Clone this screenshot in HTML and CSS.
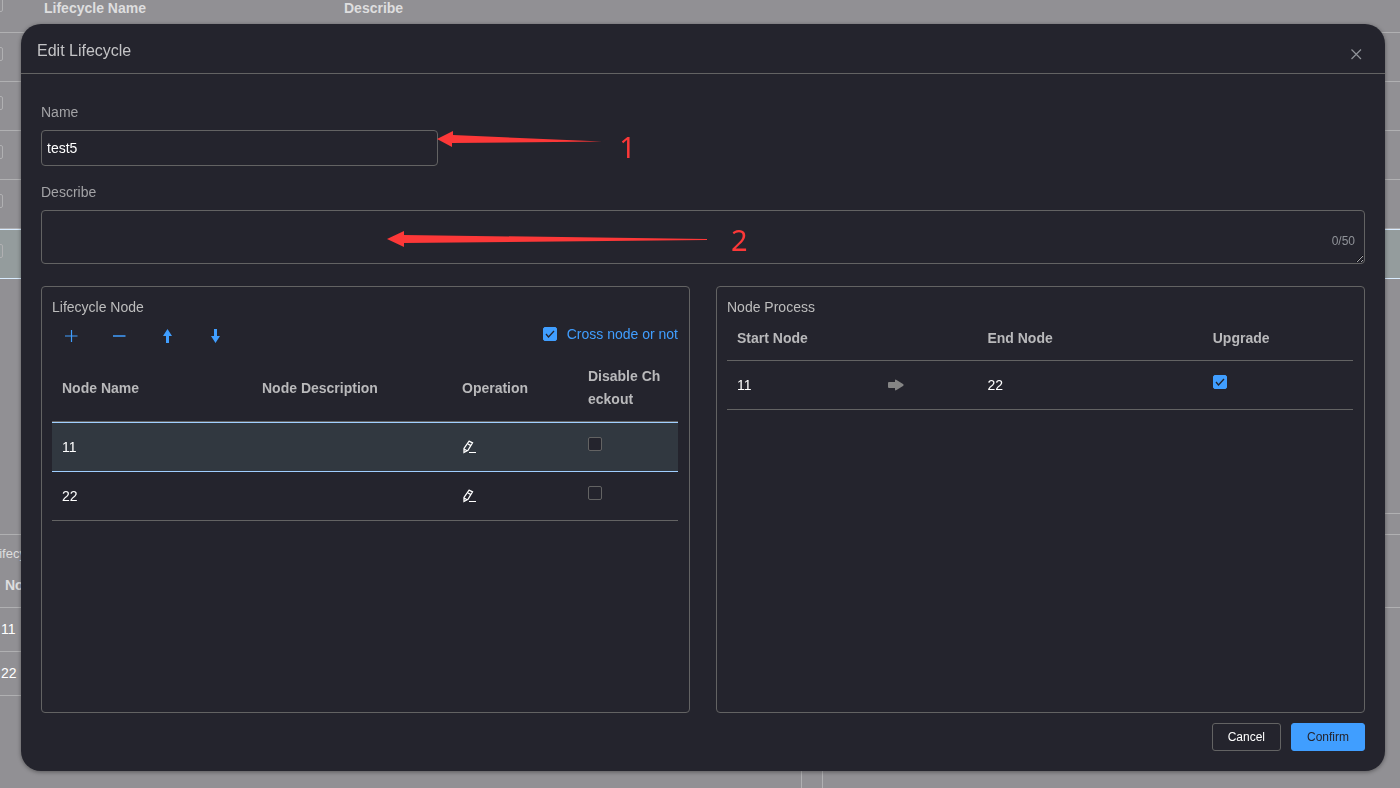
FILE: index.html
```html
<!DOCTYPE html>
<html lang="en">
<head>
<meta charset="utf-8">
<meta name="viewport" content="width=device-width, initial-scale=1">
<title>Edit Lifecycle</title>
<link rel="stylesheet" href="styles.css">
</head>
<body>
<div class="page" aria-hidden="true">
  <div class="page-list">
    <div class="page-row page-head"><span class="page-box"></span><span class="page-cell">Lifecycle Name</span><span class="page-cell">Describe</span></div>
    <div class="page-row"><span class="page-box"></span></div>
    <div class="page-row"><span class="page-box"></span></div>
    <div class="page-row"><span class="page-box"></span></div>
    <div class="page-row"><span class="page-box"></span></div>
    <div class="page-row page-row-current"><span class="page-box"></span></div>
    <div class="page-list-end"></div>
  </div>
  <div class="page-details">
    <div class="page-panel page-panel-left">
      <div class="page-title">Lifecycle Node</div>
      <div class="page-line page-line-head">Node Name</div>
      <div class="page-line">11</div>
      <div class="page-line">22</div>
    </div>
    <div class="page-panel">
      <div class="page-title">Node Process</div>
      <div class="page-line page-line-head">Start Node</div>
    </div>
  </div>
</div>

<div class="overlay">
  <section class="dialog" role="dialog" aria-modal="true" aria-labelledby="dialog-title">
    <header class="dialog-header">
      <h1 class="dialog-title" id="dialog-title">Edit Lifecycle</h1>
      <button class="icon-button close" type="button" aria-label="Close">
        <svg width="12" height="12" viewBox="0 0 12 12"><path d="M1.500 1.500l9.500 9.500M11 1.500L1.500 11" fill="none" stroke="#909399" stroke-width="1.2"/></svg>
      </button>
    </header>

    <form class="dialog-body">
      <div class="field">
        <label class="label" for="name">Name</label>
        <div class="name-box">
          <input class="input" id="name" type="text" value="test5">
          <svg class="arrow arrow-name" width="168" height="18" viewBox="0 0 168 18"><path d="M0 9L16 1V5L165 11.500L15 13V17Z" fill="#fc3838"/></svg>
          <span class="mark mark-name">1</span>
        </div>
      </div>
      <div class="field">
        <label class="label" for="describe">Describe</label>
        <div class="describe-box">
          <textarea class="input textarea" id="describe" maxlength="50"></textarea>
          <span class="counter">0/50</span>
          <svg class="arrow arrow-describe" width="321" height="18" viewBox="0 0 321 18"><path d="M0 9L17 1V5L320 9V10L17 13V17Z" fill="#fc3838"/></svg>
          <span class="mark mark-describe">2</span>
        </div>
      </div>

      <div class="panels">
        <section class="panel">
          <h2 class="panel-title">Lifecycle Node</h2>
          <div class="toolbar">
            <div class="tools">
              <button class="icon-button" type="button" aria-label="Add"><svg width="14" height="14" viewBox="0 0 14 14"><path d="M1 7H13.500M7.500 1V13" stroke="#409eff" fill="none" stroke-width="1.200"/></svg></button>
              <button class="icon-button" type="button" aria-label="Remove"><svg width="14" height="14" viewBox="0 0 14 14"><path d="M1 7H13.500" stroke="#409eff" stroke-width="1.500" fill="none"/></svg></button>
              <button class="icon-button" type="button" aria-label="Move up"><svg width="14" height="14" viewBox="0 0 14 14"><path d="M7.500 0L12 7H9V14H6V7H3Z" fill="#409eff"/></svg></button>
              <button class="icon-button" type="button" aria-label="Move down"><svg width="14" height="14" viewBox="0 0 14 14"><path d="M6 0H9V7H12L7.500 14L3 7H6Z" fill="#409eff"/></svg></button>
            </div>
            <label class="cross"><input class="check" type="checkbox" checked>Cross node or not</label>
          </div>
          <table class="table">
            <colgroup><col class="col-name"><col class="col-description"><col class="col-operation"><col class="col-disable"></colgroup>
            <thead>
              <tr><th>Node Name</th><th>Node Description</th><th>Operation</th><th>Disable Checkout</th></tr>
            </thead>
            <tbody>
              <tr class="current">
                <td>11</td><td></td>
                <td><button class="icon-button edit" type="button" aria-label="Edit 11"><svg width="14" height="14" viewBox="0 0 14 14"><path d="M7 1.200L10.500 2.800L6 10.300L2 12.500L2 8.500Z M6 4L8.500 5.300M2.500 9.200L5 10.800" fill="none" stroke="#fff" stroke-width="1.300"/><path d="M7 12.500H14" stroke="#fff"/></svg></button></td>
                <td><input class="check" type="checkbox" aria-label="Disable checkout for 11"></td>
              </tr>
              <tr>
                <td>22</td><td></td>
                <td><button class="icon-button edit" type="button" aria-label="Edit 22"><svg width="14" height="14" viewBox="0 0 14 14"><path d="M7 1.200L10.500 2.800L6 10.300L2 12.500L2 8.500Z M6 4L8.500 5.300M2.500 9.200L5 10.800" fill="none" stroke="#fff" stroke-width="1.300"/><path d="M7 12.500H14" stroke="#fff"/></svg></button></td>
                <td><input class="check" type="checkbox" aria-label="Disable checkout for 22"></td>
              </tr>
            </tbody>
          </table>
        </section>

        <section class="panel">
          <h2 class="panel-title">Node Process</h2>
          <table class="table table-process">
            <colgroup><col class="col-start"><col class="col-arrow"><col class="col-end"><col class="col-upgrade"></colgroup>
            <thead>
              <tr><th>Start Node</th><th></th><th>End Node</th><th>Upgrade</th></tr>
            </thead>
            <tbody>
              <tr>
                <td>11</td>
                <td><svg class="step" width="18" height="12" viewBox="0 0 18 12"><path d="M2 3H8V1.500Q8 0 9.500 1L16 5Q17.500 6 16 7L9.500 11Q8 12 8 10.500V9H2Q1 9 1 8V4Q1 3 2 3Z" fill="#858585"/></svg></td>
                <td>22</td>
                <td><input class="check" type="checkbox" aria-label="Upgrade" checked></td>
              </tr>
            </tbody>
          </table>
        </section>
      </div>

      <footer class="actions">
        <button class="button" type="button">Cancel</button>
        <button class="button button-primary" type="submit">Confirm</button>
      </footer>
    </form>
  </section>
</div>
</body>
</html>
```
FILE: styles.css
```css
* { box-sizing: border-box; }

html, body { height: 100%; }

body {
  margin: 0;
  overflow: hidden;
  background: #919094;
  color: #fff;
  font-family: "Liberation Sans", Arial, sans-serif;
  font-size: 14px;
}

/* Page behind the dialog */
.page {
  display: flex;
  flex-direction: column;
  height: 100%;
}

.page-list {
  display: flex;
  flex: 0 0 514px;
  flex-direction: column;
}

.page-list-end {
  flex: 1;
  width: 50%;
  margin-left: auto;
  border-bottom: 1px solid #b0b0b2;
}

.page-row {
  display: flex;
  align-items: center;
  height: 49px;
  padding-bottom: 6px;
  border-bottom: 1px solid #b0b0b2;
}

.page-head {
  height: 33px;
  padding-bottom: 16px;
  color: #dededf;
  font-weight: bold;
}

.page-row-current {
  height: 50px;
  border-top: 1px solid #d9ecff;
  border-bottom-color: #d9ecff;
  background: #949c9d;
}

.page-box {
  width: 14px;
  height: 14px;
  margin-left: -11px;
  margin-right: 41px;
  border: 1px solid #b0b0b2;
  border-radius: 2px;
}

.page-head .page-box { margin-top: -6px; }

.page-cell { width: 300px; }

.page-details {
  display: flex;
  flex: 1;
  gap: 20px;
  margin-top: 20px;
}

.page-panel {
  flex: 1 1 578px;
  border: 1px solid #b0b0b2;
  border-right: 0;
  border-bottom: 0;
}

.page-panel-left {
  flex: 0 1 820px;
  margin-left: -18px;
  border-right: 1px solid #b0b0b2;
}

.page-title {
  padding: 9px 9px 0;
  color: #dededf;
  font-size: 13px;
  line-height: 20px;
}

.page-line {
  height: 44px;
  padding-left: 18px;
  border-bottom: 1px solid #b0b0b2;
  line-height: 43px;
}

.page-line-head {
  padding-left: 22px;
  color: #dededf;
  font-weight: bold;
}

/* Dialog */
.overlay {
  position: fixed;
  inset: 0;
  padding: 24px 15px 17px 21px;
}

.dialog {
  display: flex;
  flex-direction: column;
  min-height: 100%;
  border-radius: 20px;
  background: #24242d;
  box-shadow: 0 1px 4px rgba(0, 0, 0, 0.4);
}

.dialog-header {
  display: flex;
  align-items: center;
  justify-content: space-between;
  height: 50px;
  padding: 4px 20px 0 16px;
  border-bottom: 1px solid #636363;
}

.dialog-title {
  margin: 0;
  color: #c4c4c6;
  font-size: 16px;
  font-weight: normal;
}

.icon-button {
  display: flex;
  align-items: center;
  justify-content: center;
  padding: 0;
  border: 0;
  background: none;
  cursor: pointer;
}

.close { width: 18px; height: 18px; margin-top: 6px; }

.dialog-body {
  display: flex;
  flex: 1;
  flex-direction: column;
  padding: 28px 20px 20px;
}

.label {
  display: block;
  margin-bottom: 8px;
  color: #a3a3a6;
  line-height: 20px;
}

.field { margin-bottom: 16px; }

.field + .field { margin-bottom: 22px; }

.name-box {
  position: relative;
  display: flex;
  width: 30%;
}

.describe-box { position: relative; display: flex; }

.input {
  width: 100%;
  height: 36px;
  padding: 0 5px;
  border: 1px solid #636363;
  border-radius: 4px;
  outline: 0;
  background: #24242d;
  color: #fff;
  font: inherit;
}

.textarea { height: 54px; padding: 5px; resize: vertical; }

.counter {
  position: absolute;
  right: 10px;
  bottom: 16px;
  color: #909399;
  font-size: 12px;
  line-height: 14px;
}

/* Callouts over the form */
.arrow { position: absolute; }
.arrow-name { top: 0; left: calc(100% - 1px); }
.arrow-describe { top: 20px; left: 346px; }

.mark {
  position: absolute;
  color: #fc3838;
  font-family: "Noto Sans", sans-serif;
  font-size: 29px;
  line-height: 30px;
}

.mark-name { top: 2px; left: calc(100% + 181px); }
.mark-describe { top: 15px; left: 690px; }

/* Panels */
.panels {
  display: flex;
  flex: 1;
  gap: 26px;
}

.panel {
  flex: 1 1 0;
  min-width: 0;
  padding: 10px 11px 10px 10px;
  border: 1px solid #636363;
  border-radius: 4px;
}

.panel-title {
  margin: 0;
  color: #bdbdbd;
  font-size: 14px;
  font-weight: normal;
  line-height: 20px;
}

.toolbar {
  display: flex;
  justify-content: space-between;
  height: 38px;
}

.tools {
  display: flex;
  align-items: center;
  gap: 34px;
  padding-left: 12px;
}

.cross {
  display: flex;
  align-items: center;
  gap: 10px;
  padding-bottom: 4px;
  color: #409eff;
}

.check {
  display: block;
  width: 14px;
  height: 14px;
  margin: 0;
  border: 1px solid #636363;
  border-radius: 2px;
  appearance: none;
  background: #24242d;
}

.check:checked {
  border-color: #409eff;
  background: #409eff url("data:image/svg+xml,%3Csvg xmlns='http://www.w3.org/2000/svg' viewBox='0 0 12 12'%3E%3Cpath d='M2 6L4.500 9L10 3' fill='none' stroke='%2324242d' stroke-width='1.300'/%3E%3C/svg%3E") center / 12px 12px no-repeat;
}

.table {
  width: 100%;
  border-spacing: 0;
  table-layout: fixed;
}

.table th {
  padding: 10px;
  border-bottom: 1px solid #636363;
  color: #b9b9bb;
  font-weight: bold;
  line-height: 23px;
  text-align: left;
  word-break: break-all;
}

.table td {
  height: 49px;
  padding: 0 10px;
  border-bottom: 1px solid #636363;
  line-height: 23px;
}

.table .check { margin-bottom: 6px; }

.current td {
  height: 50px;
  border-top: 1px solid #a0cfff;
  border-bottom-color: #a0cfff;
  background: #313840;
}

.col-description { width: 200px; }
.col-operation { width: 126px; }
.col-disable { width: 100px; }
.col-start { width: 24%; }
.col-arrow { width: 16%; }
.col-end { width: 36%; }
.col-upgrade { width: 24%; }

.step { display: block; }

.actions {
  display: flex;
  justify-content: flex-end;
  gap: 10px;
  margin-top: 10px;
}

.button {
  height: 28px;
  padding: 0 15px;
  border: 1px solid #636363;
  border-radius: 3px;
  background: #24242d;
  color: #fff;
  font-family: inherit;
  font-size: 12px;
}

.button-primary {
  border-color: #409eff;
  background: #409eff;
  color: #24242d;
}
```
